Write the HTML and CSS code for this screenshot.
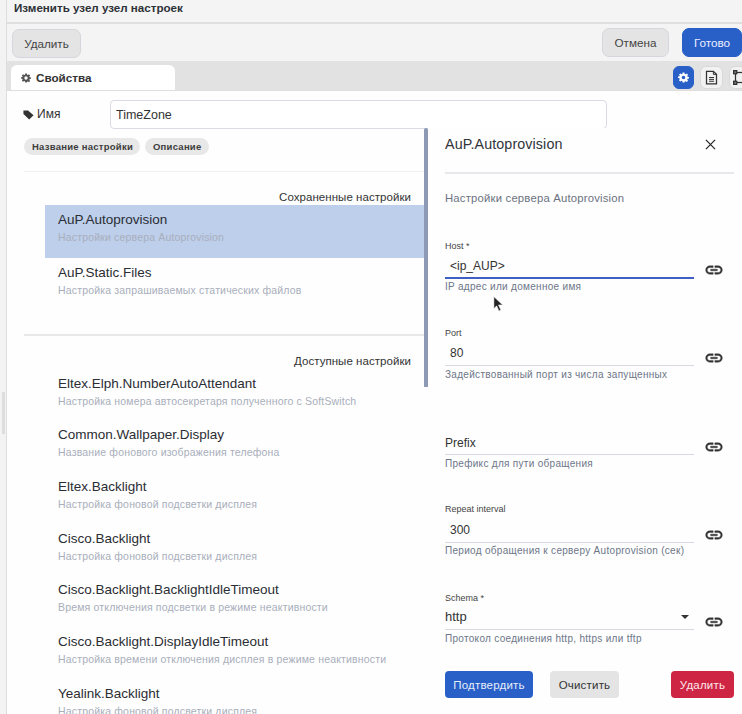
FILE: index.html
```html
<!DOCTYPE html>
<html lang="ru">
<head>
<meta charset="utf-8">
<title>Изменить узел</title>
<link rel="stylesheet" href="styles.css">
</head>
<body>
<div class="rail"><span class="rail-grip"></span></div>
<div class="app">
  <header class="title-bar">Изменить узел узел настроек</header>
  <div class="toolbar">
    <button class="btn btn-grey btn-top">Удалить</button>
    <div class="toolbar-right">
      <button class="btn btn-grey btn-cancel">Отмена</button>
      <button class="btn btn-blue btn-done">Готово</button>
    </div>
  </div>
  <div class="tabbar">
    <div class="tab">
      <svg class="ic-gear" viewBox="0 0 24 24"><path fill="#555" fill-rule="evenodd" d="M10 1h4l.6 3.1 1.9.8L19.1 3 21.9 5.900 20.100 8.500l.8 1.900L24 11v3l-3.100.6-.8 1.900 1.800 2.600-2.800 2.800-2.600-1.800-1.900.8L14 23h-4l-.6-3.100-1.900-.8-2.600 1.800L2.100 18.100l1.800-2.600-.8-1.900L0 13v-3l3.100-.6.800-1.900L2.100 5.900 4.900 3l2.600 1.900 1.900-.8zM12 8a4 4 0 1 0 0 8 4 4 0 0 0 0-8z"/></svg>
      <span>Свойства</span>
    </div>
    <div class="view-btns">
      <span class="view-btn view-on"><svg viewBox="0 0 24 24"><path fill="#fff" fill-rule="evenodd" d="M10 1h4l.6 3.100 1.900.8L19.100 3 21.900 5.900 20.100 8.500l.8 1.900L24 11v3l-3.100.6-.8 1.900 1.800 2.600-2.800 2.800-2.600-1.800-1.900.8L14 23h-4l-.6-3.100-1.900-.8-2.600 1.800L2.100 18.100l1.800-2.600-.8-1.900L0 13v-3l3.100-.6.800-1.900L2.100 5.900 4.900 3l2.600 1.900 1.900-.8zM12 8a4 4 0 1 0 0 8 4 4 0 0 0 0-8z"/></svg></span>
      <span class="view-btn view-doc"><svg viewBox="0 0 24 24" fill="none" stroke="#333" stroke-width="2"><path d="M4 2h11l5 5v15H4z"/><path d="M15 2v5h5M8 12h8M8 15h8M8 18h8" stroke-width="1.600"/></svg></span>
      <span class="view-btn view-frame"><svg viewBox="0 0 24 24" fill="none" stroke="#333" stroke-width="2"><rect x="4" y="4" width="16" height="16"/><rect x="1" y="1" width="5" height="5" fill="#777"/><rect x="18" y="1" width="5" height="5" fill="#777"/><rect x="1" y="18" width="5" height="5" fill="#777"/><rect x="18" y="18" width="5" height="5" fill="#777"/></svg></span>
    </div>
  </div>
  <main class="content">
    <div class="name-row">
      <label class="name-label"><svg class="ic-tag" viewBox="0 0 24 24"><path fill="#333" d="M1 3h10l12 10.500L13.500 23 1 11z"/></svg>Имя</label>
      <div class="name-input">TimeZone</div>
    </div>
    <div class="split">
      <section class="left">
        <div class="chips"><span class="chip">Название настройки</span><span class="chip">Описание</span></div>
        <hr class="rule-top">
        <div class="group-title">Сохраненные настройки</div>
        <div class="items">
          <div class="item item-on"><div class="item-name">AuP.Autoprovision</div><div class="item-desc">Настройки сервера Autoprovision</div></div>
          <div class="item"><div class="item-name">AuP.Static.Files</div><div class="item-desc">Настройка запрашиваемых статических файлов</div></div>
        </div>
        <hr class="rule-mid">
        <div class="group-title">Доступные настройки</div>
        <div class="items">
          <div class="item"><div class="item-name">Eltex.Elph.NumberAutoAttendant</div><div class="item-desc">Настройка номера автосекретаря полученного с SoftSwitch</div></div>
          <div class="item"><div class="item-name">Common.Wallpaper.Display</div><div class="item-desc">Название фонового изображения телефона</div></div>
          <div class="item"><div class="item-name">Eltex.Backlight</div><div class="item-desc">Настройка фоновой подсветки дисплея</div></div>
          <div class="item"><div class="item-name">Cisco.Backlight</div><div class="item-desc">Настройка фоновой подсветки дисплея</div></div>
          <div class="item"><div class="item-name">Cisco.Backlight.BacklightIdleTimeout</div><div class="item-desc">Время отключения подсветки в режиме неактивности</div></div>
          <div class="item"><div class="item-name">Cisco.Backlight.DisplayIdleTimeout</div><div class="item-desc">Настройка времени отключения дисплея в режиме неактивности</div></div>
          <div class="item"><div class="item-name">Yealink.Backlight</div><div class="item-desc">Настройка фоновой подсветки дисплея</div></div>
        </div>
      </section>
      <span class="scroll-thumb"></span>
      <aside class="drawer">
        <div class="drawer-head">
          <h2 class="drawer-title">AuP.Autoprovision</h2>
          <svg class="ic-close" viewBox="0 0 12 12"><path d="M1 1l10 10M11 1L1 11" stroke="#222" stroke-width="1.300" fill="none"/></svg>
        </div>
        <div class="drawer-rule"></div>
        <p class="drawer-desc">Настройки сервера Autoprovision</p>
        <div class="fields">
          <div class="field f-host">
            <div class="field-main">
              <div class="f-label">Host *</div>
              <div class="f-value f-pad f-focus">&lt;ip_AUP&gt;</div>
              <div class="f-hint">IP адрес или доменное имя</div>
            </div>
            <svg class="ic-link" viewBox="0 0 24 24"><path fill="#333" stroke="#333" stroke-width=".5" d="M3.900 12c0-1.710 1.390-3.100 3.100-3.100h4V7H7c-2.760 0-5 2.240-5 5s2.240 5 5 5h4v-1.900H7c-1.710 0-3.100-1.390-3.100-3.100zM8 13h8v-2H8v2zm9-6h-4v1.900h4c1.710 0 3.100 1.390 3.100 3.100s-1.390 3.100-3.100 3.100h-4V17h4c2.760 0 5-2.240 5-5s-2.240-5-5-5z"/></svg>
          </div>
          <div class="field f-port">
            <div class="field-main">
              <div class="f-label">Port</div>
              <div class="f-value f-pad">80</div>
              <div class="f-hint">Задействованный порт из числа запущенных</div>
            </div>
            <svg class="ic-link" viewBox="0 0 24 24"><path fill="#333" stroke="#333" stroke-width=".5" d="M3.900 12c0-1.710 1.390-3.100 3.100-3.100h4V7H7c-2.760 0-5 2.240-5 5s2.240 5 5 5h4v-1.900H7c-1.710 0-3.100-1.390-3.100-3.100zM8 13h8v-2H8v2zm9-6h-4v1.900h4c1.710 0 3.100 1.390 3.100 3.100s-1.390 3.100-3.100 3.100h-4V17h4c2.760 0 5-2.240 5-5s-2.240-5-5-5z"/></svg>
          </div>
          <div class="field f-prefix">
            <div class="field-main">
              <div class="f-value">Prefix</div>
              <div class="f-hint">Префикс для пути обращения</div>
            </div>
            <svg class="ic-link" viewBox="0 0 24 24"><path fill="#333" stroke="#333" stroke-width=".5" d="M3.900 12c0-1.710 1.390-3.100 3.100-3.100h4V7H7c-2.760 0-5 2.240-5 5s2.240 5 5 5h4v-1.900H7c-1.710 0-3.100-1.390-3.100-3.100zM8 13h8v-2H8v2zm9-6h-4v1.900h4c1.710 0 3.100 1.390 3.100 3.100s-1.390 3.100-3.100 3.100h-4V17h4c2.760 0 5-2.240 5-5s-2.240-5-5-5z"/></svg>
          </div>
          <div class="field f-repeat">
            <div class="field-main">
              <div class="f-label">Repeat interval</div>
              <div class="f-value f-pad">300</div>
              <div class="f-hint">Период обращения к серверу Autoprovision (сек)</div>
            </div>
            <svg class="ic-link" viewBox="0 0 24 24"><path fill="#333" stroke="#333" stroke-width=".5" d="M3.900 12c0-1.710 1.390-3.100 3.100-3.100h4V7H7c-2.760 0-5 2.240-5 5s2.240 5 5 5h4v-1.900H7c-1.710 0-3.100-1.390-3.100-3.100zM8 13h8v-2H8v2zm9-6h-4v1.900h4c1.710 0 3.100 1.390 3.100 3.100s-1.390 3.100-3.100 3.100h-4V17h4c2.760 0 5-2.240 5-5s-2.240-5-5-5z"/></svg>
          </div>
          <div class="field f-schema">
            <div class="field-main">
              <div class="f-label">Schema *</div>
              <div class="f-value f-select"><span>http</span><span class="caret"></span></div>
              <div class="f-hint">Протокол соединения http, https или tftp</div>
            </div>
            <svg class="ic-link" viewBox="0 0 24 24"><path fill="#333" stroke="#333" stroke-width=".5" d="M3.900 12c0-1.710 1.390-3.100 3.100-3.100h4V7H7c-2.760 0-5 2.240-5 5s2.240 5 5 5h4v-1.900H7c-1.710 0-3.100-1.390-3.100-3.100zM8 13h8v-2H8v2zm9-6h-4v1.900h4c1.710 0 3.100 1.390 3.100 3.100s-1.390 3.100-3.100 3.100h-4V17h4c2.760 0 5-2.240 5-5s-2.240-5-5-5z"/></svg>
          </div>
        </div>
        <div class="drawer-actions">
          <button class="act act-blue">Подтвердить</button>
          <button class="act act-grey">Очистить</button>
          <button class="act act-red">Удалить</button>
        </div>
      </aside>
    </div>
  </main>
</div>
<svg class="cursor" viewBox="0 0 12 18"><path d="M1 1v13l3-3 2.500 5.500 2-1L6 10h4.500z" fill="#222" stroke="#eee" stroke-width=".6"/></svg>
</body>
</html>
```
FILE: styles.css
```css
* { box-sizing: border-box; }
html, body { margin: 0; padding: 0; height: 714px; overflow: hidden; }
body { display: flex; font-family: "Liberation Sans", Arial, sans-serif; color: #333; background: #fff; position: relative; }
.rail { width: 7px; flex: none; background: #f3f3f3; border-right: 1px solid #ddd; display: flex; align-items: center; }
.rail-grip { width: 3px; height: 42px; margin-left: 2px; margin-top: 112px; background: #ddd; }
.app { flex: 1; min-width: 0; display: flex; flex-direction: column; }
.title-bar { height: 24px; padding: 1px 7px 0; font-size: 11.600px; line-height: 14px; font-weight: 700; color: #2d3138; background: #f4f4f4; border-bottom: 2px solid #dfdfe2; }
.toolbar { height: 37px; display: flex; justify-content: space-between; align-items: flex-start; padding: 4px 8px 0 5px; background: #f4f4f4; }
.toolbar-right { display: flex; gap: 13px; }
.btn { height: 29px; border-radius: 7px; font: 11.700px "Liberation Sans", Arial, sans-serif; padding: 0; }
.btn-grey { background: #e4e4e4; border: 1px solid #d5d7dc; color: #444; }
.btn-blue { background: #2860c8; border: 1px solid #2860c8; color: #eef; }
.btn-top { width: 69px; margin-top: 1px; }
.btn-cancel { width: 67px; }
.btn-done { width: 60px; margin-right: -8px; }
.tabbar { height: 30px; background: #e2e2e2; display: flex; justify-content: space-between; align-items: flex-end; padding-left: 4px; border-bottom: 1px solid #dedede; }
.tab { width: 164px; height: 25px; background: #fff; border-radius: 6px 6px 0 0; display: flex; align-items: center; gap: 5px; padding-left: 10px; font-size: 11.700px; font-weight: 700; color: #333; }
.ic-gear { width: 10px; height: 10px; }
.view-btns { display: flex; gap: 6px; align-self: flex-start; padding-top: 5px; width: 69px; flex: none; }
.view-btn { flex: none; width: 22px; height: 23px; border-radius: 6px; background: #f2f2f2; border: 1px solid #d9d9d9; display: flex; align-items: center; justify-content: center; }
.view-btn svg { width: 15px; height: 15px; flex: none; }
.view-on { width: 21px; background: #2860c8; border-color: #2860c8; }
.view-on svg { width: 11px; height: 11px; }
.view-doc { width: 23px; }
.content { flex: 1; min-height: 0; background: #fefefe; display: flex; flex-direction: column; }
.name-row { display: flex; align-items: flex-start; padding: 9px 0 0 16px; height: 37px; flex: none; }
.name-label { width: 87px; font-size: 12px; color: #333; display: flex; align-items: center; gap: 3px; padding-top: 7px; }
.ic-tag { width: 11px; height: 11px; }
.name-input { width: 497px; height: 29px; border: 1px solid #d9dbe6; border-radius: 4px; padding: 7px 5px; font-size: 12.500px; line-height: 15px; color: #333; background: #fff; }
.split { flex: 1; min-height: 0; display: flex; overflow: hidden; position: relative; }
.left { width: 417px; flex: none; padding: 10px 0 0 17px; }
.chips { display: flex; gap: 5px; }
.chip { height: 17px; padding: 0 7px 0 8px; border-radius: 9px; background: #e8e8e8; font-size: 9.500px; line-height: 17px; font-weight: 700; letter-spacing: .25px; color: #3d3d3d; }
.rule-top { border: 0; height: 1px; background: #f0f0f0; margin: 16px 0 0; }
.group-title { font-size: 11.500px; line-height: 14px; text-align: right; letter-spacing: .05px; color: #333; padding-right: 13px; margin-top: 18px; height: 15px; }
.items { margin-left: 21px; margin-top: 0; }
.item { height: 51.700px; padding: 7px 0 0 13px; }
.item-on { background: #bdcfeb; height: 53px; }
.item-name { font-size: 13.500px; line-height: 16px; color: #2a2d33; }
.item-desc { font-size: 10.500px; line-height: 14px; margin-top: 2px; color: #a9aebb; letter-spacing: .17px; }
.rule-mid { border: 0; height: 2px; background: #e8e8e8; margin: 24px 0 0; }
.rule-mid + .group-title { margin-top: 18px; }
.scroll-thumb { width: 4px; height: 259px; flex: none; background: #8e9ab5; border-radius: 2px 2px 0 0; }
.drawer { width: 314px; flex: none; padding: 0 8px 0 17px; background: #fefefe; }
.drawer-head { display: flex; justify-content: space-between; align-items: center; padding-right: 18px; height: 30px; margin-top: 1px; }
.drawer-title { margin: 0; font-size: 14.300px; line-height: 30px; font-weight: 400; color: #30343b; letter-spacing: .1px; }
.ic-close { width: 11px; height: 11px; }
.drawer-rule { height: 2px; background: #e8e8ec; margin-top: 13px; }
.drawer-desc { margin: 17px 0 0; font-size: 11.300px; line-height: 14px; color: #6b7280; letter-spacing: .2px; }
.fields { margin-top: 33px; }
.field { display: flex; align-items: flex-start; gap: 10px; height: 88px; }
.field-main { width: 249px; flex: none; padding-top: 2px; }
.f-prefix { height: 86px; }
.f-repeat { height: 87px; }
.f-schema { height: 84px; }
.f-label { font-size: 9px; line-height: 10px; color: #444; height: 11px; }
.f-value { height: 26px; font-size: 12px; line-height: 20px; padding-top: 3px; color: #333; border-bottom: 1px solid #d6d8e2; margin-top: 1px; }
.f-pad { padding-left: 5px; }
.f-focus { border-bottom: 2px solid #3f5fc4; height: 27px; padding-top: 4px; margin-top: 0; }
.f-host .field-main { padding-top: 3px; }
.f-hint { font-size: 10px; line-height: 12px; color: #6d7688; letter-spacing: .3px; margin-top: 3px; }
.f-focus + .f-hint { margin-top: 2px; }
.ic-link { width: 20px; height: 20px; margin-top: 22px; flex: none; }
.f-prefix .field-main { padding-top: 14px; }
.f-prefix .f-value { padding-top: 4px; }
.f-prefix .ic-link { margin-top: 23px; }
.f-repeat .ic-link, .f-schema .ic-link { margin-top: 25px; }
.f-repeat .field-main { padding-top: 4px; }
.f-repeat .f-value { margin-top: 2px; }
.f-repeat .f-hint { margin-top: 2px; }
.f-schema .field-main { padding-top: 6px; }
.f-schema .f-value { margin-top: 0; padding-top: 0; font-size: 13px; }
.f-select { display: flex; justify-content: space-between; align-items: center; padding-right: 5px; }
.caret { width: 0; height: 0; border: 4px solid transparent; border-top: 4px solid #333; border-bottom: 0; }
.drawer-actions { display: flex; }
.act { height: 27px; border: 0; border-radius: 4px; font: 11.500px "Liberation Sans", Arial, sans-serif; letter-spacing: .2px; padding: 0; }
.act-blue { width: 88px; background: #2860c8; color: #e9eefb; }
.act-grey { width: 69px; margin-left: 17px; background: #e4e4e4; color: #333; }
.act-red { width: 63px; margin-left: 52px; background: #cf2545; color: #fde8ec; }
.cursor { position: absolute; left: 493px; top: 295px; width: 11px; height: 18px; }
```
